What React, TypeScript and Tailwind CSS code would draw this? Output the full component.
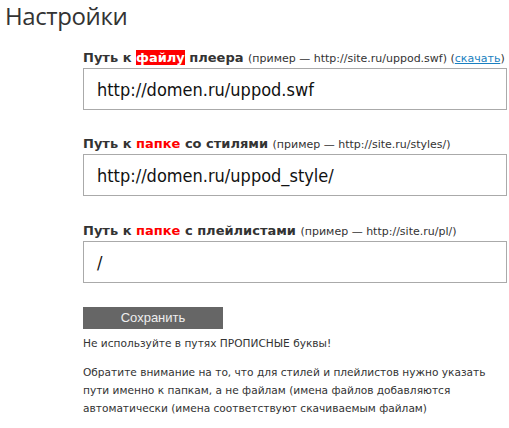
export default function App() {
  const labelCls = "h-[16px] mb-[2px] leading-[16px] whitespace-nowrap text-[13px] font-bold text-[#333] [font-family:'DejaVu_Sans',sans-serif]";
  const smallCls = "font-normal text-[11px] text-[#333]";
  const boxCls = "h-[42px] w-[424px] border border-[#aaa] bg-white pl-[13px] flex items-center text-[18px] text-[#111] [font-family:'DejaVu_Sans_Condensed','DejaVu_Sans',sans-serif]";
  return (
    <div className="w-[509px] h-[428px] bg-white overflow-hidden">
      <h1 className="pl-[5px] pt-[1px] h-[50px] text-[24px] tracking-[-0.4px] leading-[30px] text-[#333] [font-family:'Open_Sans',sans-serif]">Настройки</h1>
      <div className="ml-[83px]">
        <div className={labelCls}>
          Путь к <span className="bg-[#f00] text-white">файлу</span> плеера{" "}
          <span className={smallCls}>(пример — http://site.ru/uppod.swf) (<span className="text-[#1a7fc0] underline">скачать</span>)</span>
        </div>
        <div className={boxCls}>http://domen.ru/uppod.swf</div>
        <div className="h-[26px]" />
        <div className={labelCls}>
          Путь к <span className="text-[#f00]">папке</span> со стилями{" "}
          <span className={smallCls}>(пример — http://site.ru/styles/)</span>
        </div>
        <div className={boxCls}>http://domen.ru/uppod_style/</div>
        <div className="h-[27px]" />
        <div className={labelCls}>
          Путь к <span className="text-[#f00]">папке</span> с плейлистами{" "}
          <span className={smallCls}>(пример — http://site.ru/pl/)</span>
        </div>
        <div className={boxCls}>/</div>
        <div className="h-[21px]" />
        <button className="w-[140px] h-[22px] bg-[#666] text-[#eee] text-[13px] leading-[22px] [font-family:'Liberation_Sans',sans-serif]">Сохранить</button>
        <div className="mt-[5px] text-[10.6px] leading-[18px] text-[#333] [font-family:'DejaVu_Sans',sans-serif]">
          <p>Не используйте в путях ПРОПИСНЫЕ буквы!</p>
          <p className="mt-[11px] w-[410px]">Обратите внимание на то, что для стилей и плейлистов нужно указать пути именно к папкам, а не файлам (имена файлов добавляются автоматически (имена соответствуют скачиваемым файлам)</p>
        </div>
      </div>
    </div>
  );
}
